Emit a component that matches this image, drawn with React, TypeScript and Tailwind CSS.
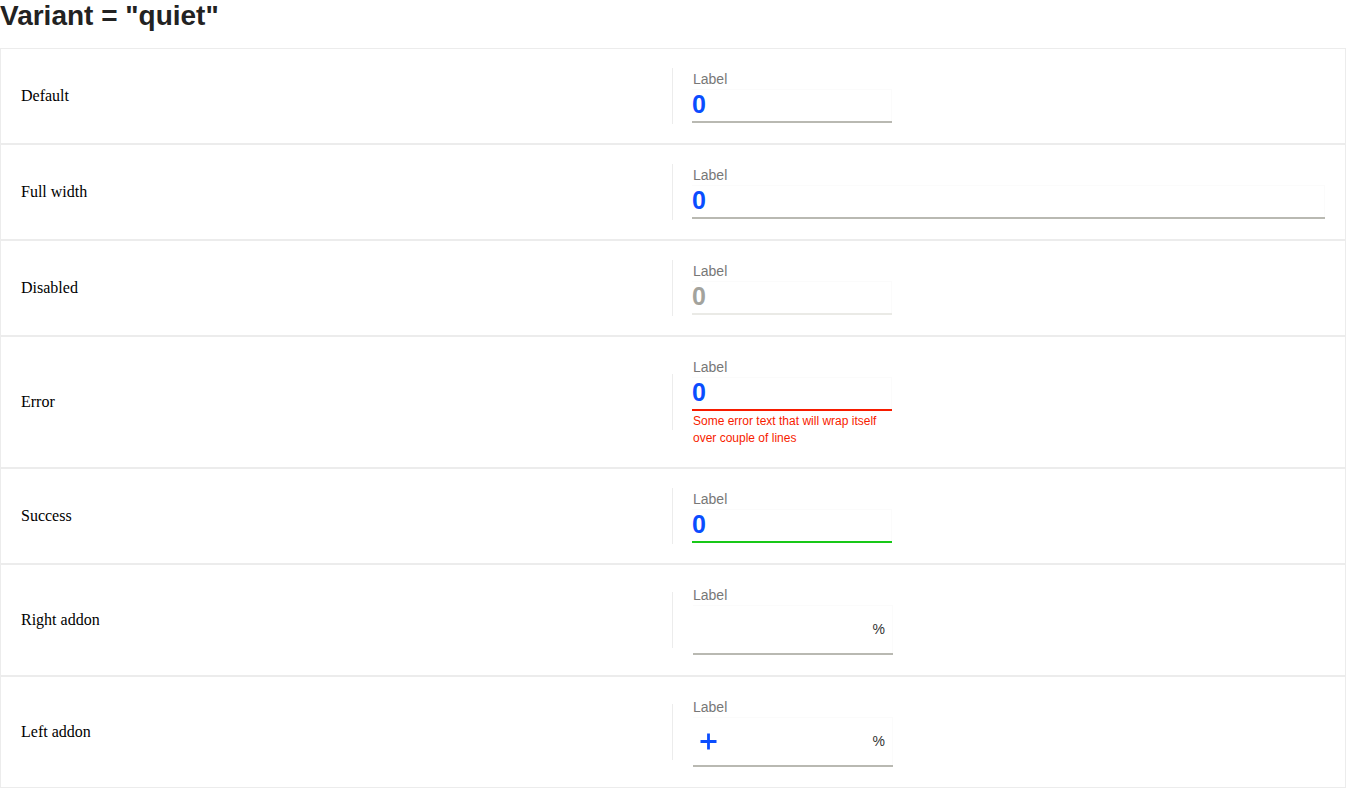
import type { ReactNode } from "react";

type FieldState = "default" | "disabled" | "error" | "success";

type QuietFieldProps = {
  state?: FieldState;
  fullWidth?: boolean;
  value?: string;
  leftAddon?: ReactNode;
  rightAddon?: ReactNode;
  errorText?: string;
};

function PlusIcon() {
  return (
    <svg width="17" height="17" viewBox="0 0 17 17" aria-hidden="true">
      <path d="M8.5 0.5v16M0.5 8.5h16" stroke="#0a4dff" strokeWidth="2.8" fill="none" />
    </svg>
  );
}

function QuietField({ state = "default", fullWidth, value, leftAddon, rightAddon, errorText }: QuietFieldProps) {
  const hasAddon = Boolean(leftAddon || rightAddon);

  const underline =
    state === "error"
      ? "border-[#f71c00]"
      : state === "success"
        ? "border-[#18c818]"
        : state === "disabled"
          ? "border-[#eaeae6]"
          : "border-[#b9b9b2]";

  const valueColor = state === "disabled" ? "text-[#a3a39d]" : "text-[#0a4dff]";

  return (
    <div className={fullWidth ? "w-full" : hasAddon ? "ml-px w-[200px]" : "w-[200px]"}>
      <div className={`h-5 text-[14px] leading-5 text-[#777] ${hasAddon ? "" : "pl-px"}`}>Label</div>
      <div
        className={`flex items-center border-b-2 shadow-[inset_-1px_1px_0_#fbfbfb] ${underline} ${
          hasAddon ? "h-[50px] pr-2 pl-[7px]" : "h-[34px] pb-[2px]"
        }`}
      >
        {leftAddon ? <span className="flex items-center">{leftAddon}</span> : null}
        <span className={`flex-1 text-[25px] font-bold leading-[30px] ${valueColor}`}>{value}</span>
        {rightAddon ? <span className="text-[14px] text-[#333]">{rightAddon}</span> : null}
      </div>
      {errorText ? (
        <div className="pt-[2px] pl-px text-[12px] leading-[17px] text-[#f71c00]">{errorText}</div>
      ) : null}
    </div>
  );
}

type RowProps = {
  title: string;
  children: ReactNode;
};

function Row({ title, children }: RowProps) {
  return (
    <div className="flex items-center border border-[#ececec] p-5">
      <div className="flex w-1/2 items-center">
        <div className="flex-1 text-[16px] text-black" style={{ fontFamily: '"Liberation Serif", serif' }}>
          {title}
        </div>
        <div className="-my-px h-14 w-px bg-[#ececec]" />
      </div>
      <div className="w-1/2 pl-[19px]">{children}</div>
    </div>
  );
}

export default function App() {
  return (
    <div className="min-h-screen bg-white" style={{ fontFamily: '"Liberation Sans", Arial, sans-serif' }}>
      <h2 className="mb-[17px] text-[28px] font-bold leading-[31px] text-[#222]">Variant = "quiet"</h2>

      <Row title="Default">
        <QuietField value="0" />
      </Row>
      <Row title="Full width">
        <QuietField value="0" fullWidth />
      </Row>
      <Row title="Disabled">
        <QuietField value="0" state="disabled" />
      </Row>
      <Row title="Error">
        <QuietField value="0" state="error" errorText="Some error text that will wrap itself over couple of lines" />
      </Row>
      <Row title="Success">
        <QuietField value="0" state="success" />
      </Row>
      <Row title="Right addon">
        <QuietField rightAddon="%" />
      </Row>
      <Row title="Left addon">
        <QuietField leftAddon={<PlusIcon />} rightAddon="%" />
      </Row>
    </div>
  );
}
